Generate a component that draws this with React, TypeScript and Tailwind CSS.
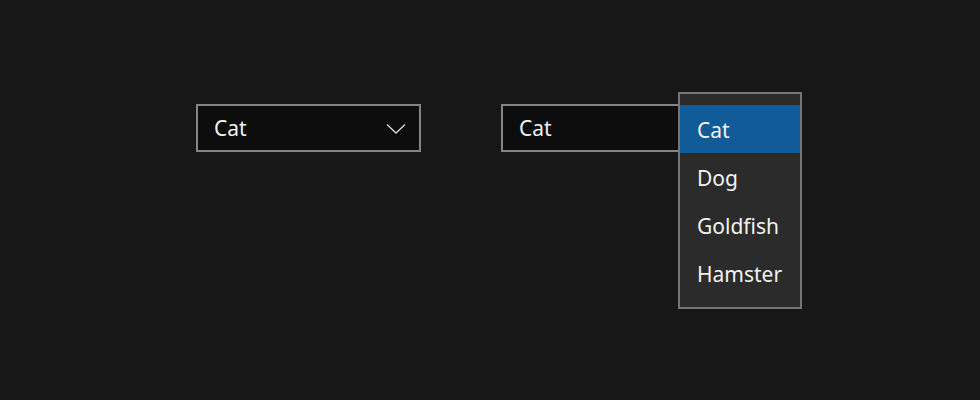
import React from 'react';

const PETS = ['Cat', 'Dog', 'Goldfish', 'Hamster'];

function Chevron() {
  return (
    <svg width="20" height="11" viewBox="0 0 20 11" fill="none" className="block">
      <path d="M1 1.5 L10 10 L19 1.5" stroke="#d9d9d9" strokeWidth="1.3" />
    </svg>
  );
}

function ComboBox({ value, open }: { value: string; open?: boolean }) {
  return (
    <div className="relative">
      <div className="w-[225px] h-[48px] border-2 border-[#858585] bg-[#0d0d0d] flex items-center justify-between pl-[16px] pr-[13px]">
        <span className="text-[21px] text-[#f2f2f2] leading-none">{value}</span>
        {!open && <Chevron />}
      </div>
      {open && (
        <div className="absolute left-[177px] top-[-12px] w-[124px] border-2 border-[#767676] bg-[#2b2b2b] pt-[11px] pb-[10px]">
          {PETS.map((p) => (
            <div
              key={p}
              className={
                'h-[48px] flex items-center pl-[17px] pt-[3px] text-[21px] text-[#f2f2f2] ' +
                (p === value ? 'bg-[#125b99]' : '')
              }
            >
              {p}
            </div>
          ))}
        </div>
      )}
    </div>
  );
}

export default function App() {
  return (
    <div
      className="w-[980px] h-[400px] bg-[#171717] pt-[104px] pl-[196px]"
      style={{ fontFamily: '"Noto Sans", "Open Sans", sans-serif' }}
    >
      <div className="flex gap-[80px]">
        <ComboBox value="Cat" />
        <ComboBox value="Cat" open />
      </div>
    </div>
  );
}
